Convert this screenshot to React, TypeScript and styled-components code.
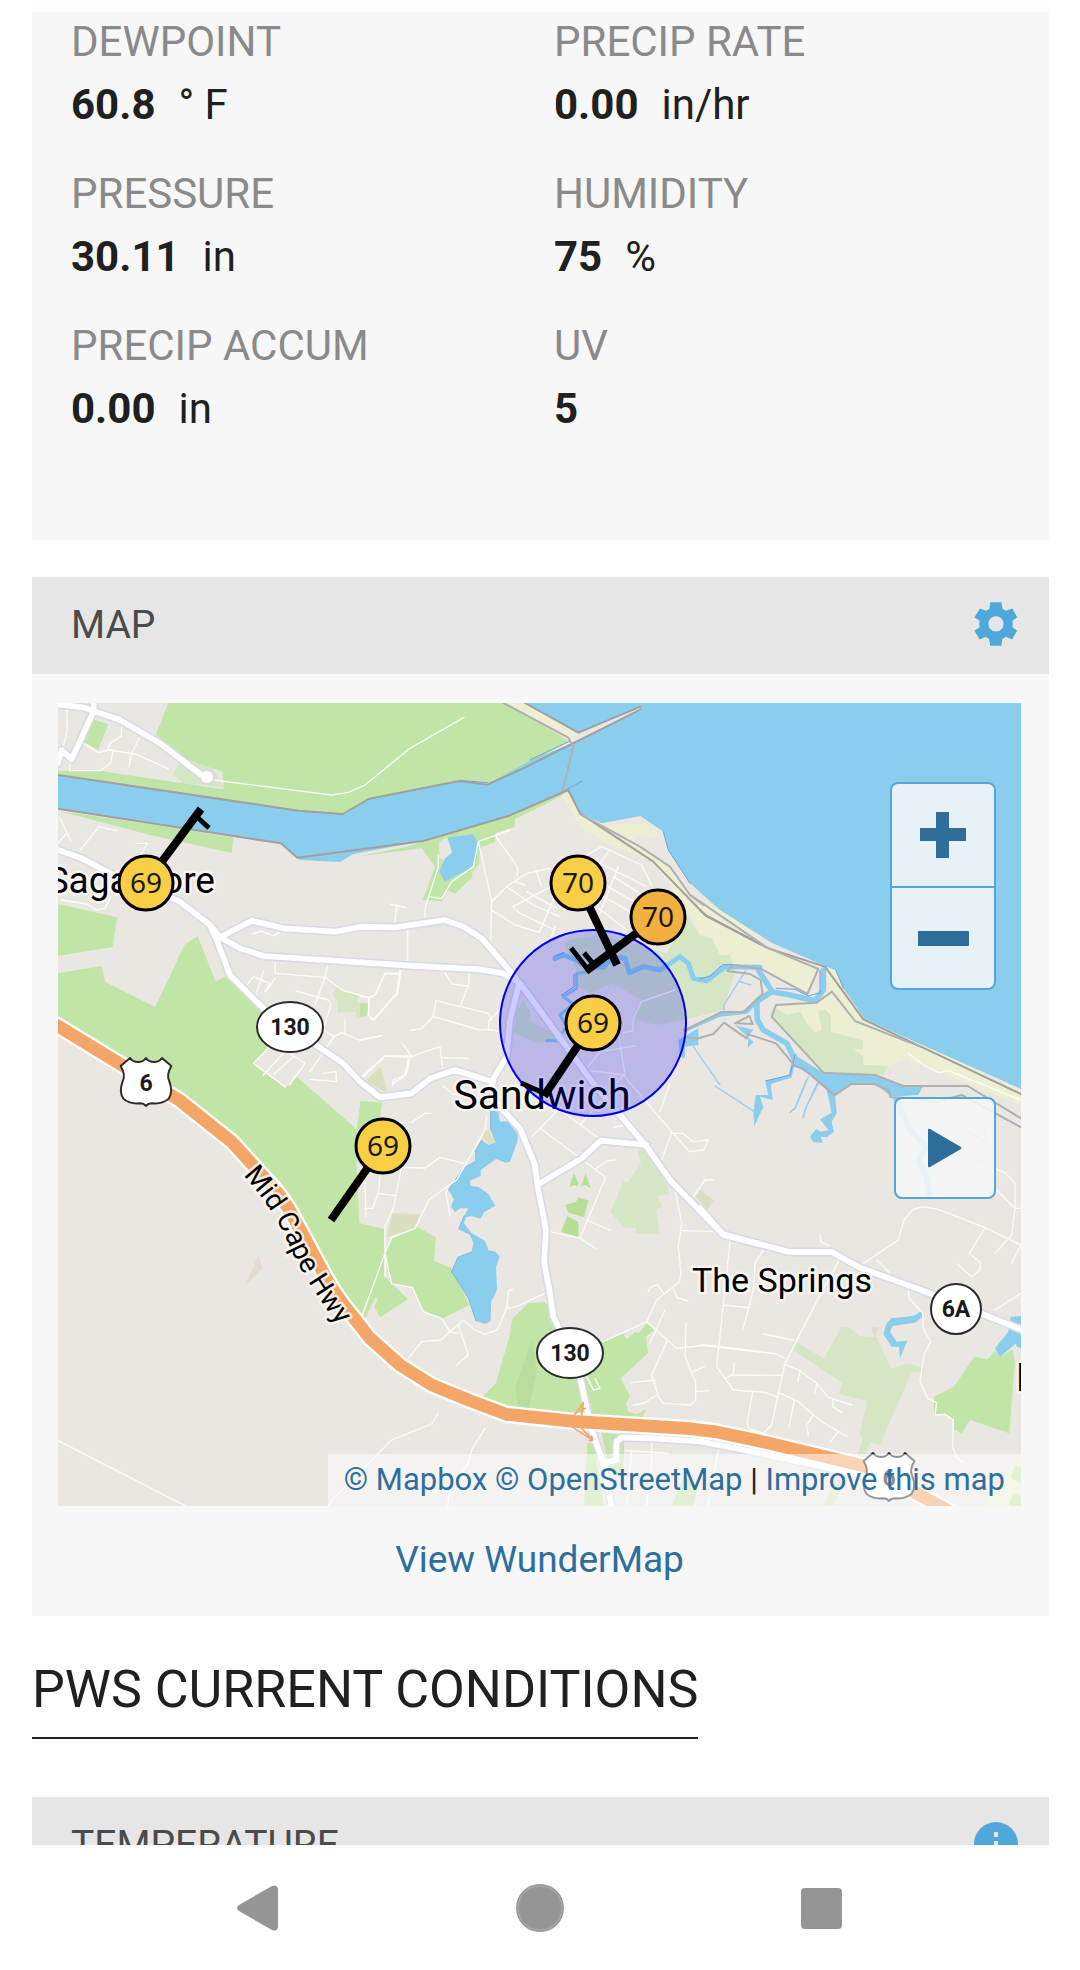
import React from 'react';
import styled, { createGlobalStyle } from 'styled-components';

const colors = {
  ink: '#202020',
  label: '#8a8a8a',
  title: '#4b4b4b',
  link: '#2e6e9b',
  accent: '#4fa8d9',
  panel: '#f7f7f7',
  bar: '#e6e6e6',
  nav: '#959595',
};

const GlobalStyle = createGlobalStyle`
  *, *::before, *::after { box-sizing: border-box; }
  body {
    margin: 0;
    background: #fefefe;
    color: ${colors.ink};
    font-family: Roboto, "Liberation Sans", sans-serif;
  }
  button { font: inherit; color: inherit; cursor: pointer; }
`;

const Screen = styled.div`
  display: flex;
  flex-direction: column;
  height: 100vh;
`;

const Content = styled.main`
  flex: 1;
  min-height: 0;
  overflow-y: auto;
  scrollbar-width: none;
  padding: 0 31px 0 32px;
`;

const TopStrip = styled.div`
  height: 12px;
  background: #fdfdfd;
`;

const Panel = styled.section`
  background: ${colors.panel};
`;

const Readings = styled.dl`
  display: grid;
  grid-template-columns: 1fr 1fr;
  row-gap: 29px;
  margin: 0 0 37px;
  padding: 0 12px 101px 39px;
  background: ${colors.panel};
`;

const Reading = styled.div`
  display: flex;
  flex-direction: column;
  gap: 3px;
  font-size: 42px;
  line-height: 60px;
`;

const ReadingLabel = styled.dt`
  color: ${colors.label};
  text-transform: uppercase;
`;

const ReadingValue = styled.dd`
  display: flex;
  gap: 23px;
  margin: 0;
`;

const PanelHeader = styled.header`
  display: flex;
  justify-content: space-between;
  align-items: flex-start;
  height: 97px;
  padding: 0 31px 0 39px;
  background: ${colors.bar};
`;

const PanelTitle = styled.h3`
  margin: 0;
  font-size: 39px;
  font-weight: 400;
  line-height: 97px;
  color: ${colors.title};
  text-transform: uppercase;
`;

const IconButton = styled.button`
  width: 44px;
  height: 44px;
  margin: 25px 0 0;
  padding: 0;
  border: 0;
  background: none;
  svg { display: block; }
`;

const MapBody = styled.div`
  padding: 29px 28px 26px 26px;
`;

const MapFrame = styled.div`
  position: relative;
  overflow: hidden;
`;

const MapDrawing = styled.svg`
  display: block;
  width: 100%;
  height: auto;
  font-family: Roboto, "Liberation Sans", sans-serif;
`;

const Controls = styled.div`
  position: absolute;
  top: 79px;
  right: 25px;
  display: flex;
  flex-direction: column;
  align-items: flex-end;
  gap: 107px;
`;

const ZoomGroup = styled.div`
  display: flex;
  flex-direction: column;
  width: 106px;
  border: 2px solid ${colors.accent};
  border-radius: 8px;
  background: rgba(246, 246, 246, 0.87);
`;

const ControlButton = styled.button`
  display: flex;
  align-items: center;
  justify-content: center;
  height: 102px;
  padding: 0;
  border: 0;
  background: none;
  & + & { border-top: 2px solid ${colors.accent}; }
`;

const PlayButton = styled(ControlButton)`
  width: 102px;
  border: 2px solid ${colors.accent};
  border-radius: 8px;
  background: rgba(246, 246, 246, 0.87);
`;

const Attribution = styled.div`
  position: absolute;
  right: 0;
  bottom: 0;
  padding: 0 16px;
  background: rgba(255, 255, 255, 0.5);
  font-size: 31px;
  line-height: 52px;
  white-space: nowrap;
`;

const Link = styled.a`
  color: ${colors.link};
  text-decoration: none;
`;

const MapLink = styled(Link)`
  display: block;
  padding-top: 24px;
  font-size: 37px;
  line-height: 60px;
  text-align: center;
`;

const SectionTitle = styled.h2`
  width: fit-content;
  margin: 34px 0 58px;
  padding-bottom: 7px;
  border-bottom: 2px solid ${colors.ink};
  font-size: 52px;
  font-weight: 400;
  line-height: 80px;
  text-transform: uppercase;
`;

const SystemNav = styled.nav`
  display: flex;
  flex: none;
  align-items: center;
  justify-content: center;
  gap: 234px;
  height: 125px;
  background: #fefefe;
`;

const NavButton = styled.button`
  width: 48px;
  height: 48px;
  padding: 0;
  border: 0;
  background: none;
  svg { display: block; }
`;

const readings = [
  { label: 'Dewpoint', value: '60.8', unit: '° F' },
  { label: 'Precip Rate', value: '0.00', unit: 'in/hr' },
  { label: 'Pressure', value: '30.11', unit: 'in' },
  { label: 'Humidity', value: '75', unit: '%' },
  { label: 'Precip Accum', value: '0.00', unit: 'in' },
  { label: 'UV', value: '5' },
];

/* The map is surveyed in overlapping tiles at three units per pixel. */
const tiles = {
  nw: [-8, -3],
  n: [342, -3],
  ne: [642, -3],
  mid: [302, 257],
  sw: [-8, 377],
  s: [342, 377],
  se: [642, 377],
} as const;

type TileName = keyof typeof tiles;
type Shape = { tile: TileName; d: string; fill?: string; width?: number; stroke?: string };

const green = '#c0e5a7';
const pale = '#d4e6c3';
const sand = '#edeed2';
const tan = '#dadfbd';
const water = '#8bcdec';

const areas: Shape[] = [
  { tile: 'nw', fill: green, d: 'M355 0L355 9L318 103L400 180L517 214L521 268L170 216L158 212L24 212V225L745 332L878 342L958 296L1228 243L1312 252L1420 205L1556 122L1355 0Z' },
  { tile: 'nw', fill: pale, d: 'M388 190L430 182L490 208L521 262L400 250L368 225Z' },
  { tile: 'nw', fill: green, d: 'M128 57L175 73L145 150L100 125ZM24 332L390 386L550 413L545 459L300 405ZM24 612L201 652L188 741L24 768Z' },
  { tile: 'nw', fill: green, d: 'M24 820L155 798L165 845L316 921L403 735L443 708L497 845L525 830L640 930L650 1045L612 1090L705 1165L740 1130L920 1288L932 1203L997 1208L990 1250L922 1290L920 1402L928 1570L1003 1587L1005 1730L1073 1797L990 1851L973 1820L985 1795L975 1792L942 1860L905 1840L720 1510L545 1305L220 1090L24 960Z' },
  { tile: 'nw', fill: pale, d: 'M860 862L880 872L922 885V908L956 910L952 947L920 955L917 936L862 938V905L847 882Z' },
  { tile: 'n', fill: green, d: 'M-130 470L20 440L70 425L325 348L490 278V285L345 358V380L290 398L285 425L240 443L238 490L215 520L218 530L165 582L145 570L125 604L68 600L105 500L65 445Z' },
  { tile: 'n', fill: '#eae7e2', d: 'M118 425L142 410L155 455L135 480L118 475Z' },
  { tile: 'n', fill: sand, d: 'M320 9H375L535 98L520 122L502 112Z' },
  { tile: 'n', fill: sand, d: 'M485 285L505 280L540 345L620 375L735 370L775 400L760 415L715 405L700 430L810 500L870 585L1000 650L1080 715V805L975 795L950 740L870 650L760 485L620 430L545 385Z' },
  { tile: 'ne', fill: sand, d: 'M-40 600L0 625L205 745L355 805L322 882L182 806L100 795L65 765L0 715Z' },
  { tile: 'ne', fill: sand, d: 'M375 798L410 812L430 865L495 958L963 1172V1215L620 1078L565 1100L370 1118L215 950L228 915L350 908L388 870Z' },
  { tile: 'ne', fill: pale, d: 'M215 945L230 925L260 945L300 935L320 970L345 998L365 990L355 935L375 928L392 945V995L490 1022L488 1050L455 1045L490 1070V1095L565 1098L550 1125L370 1118Z' },
  { tile: 'n', fill: pale, d: 'M505 720L600 705L700 730L800 760L860 650L900 705L935 715L960 765L990 765L1005 815L970 930L870 955L770 975L710 960L705 935L725 900L635 850L570 880L535 860L530 810L495 740Z' },
  { tile: 'n', fill: pale, d: 'M370 900L390 935L395 965L430 985L490 1015L420 1030L340 1000L350 930Z' },
  { tile: 'sw', fill: '#e0ddd0', d: 'M625 525L638 565L585 618Z' },
  { tile: 'mid', fill: green, d: 'M75 880L95 835L170 800L228 832L222 902L275 925L328 1035L245 1077L190 1055L157 982L95 972ZM0 792L72 808V950L110 985L143 1017L62 1071L45 1040L55 1018L45 1012L14 1080L0 1060ZM0 425L65 430L60 480H0ZM0 130H22V165L0 170Z' },
  { tile: 'mid', fill: tan, d: 'M97 760L180 762L165 805L80 832ZM62 318L18 362L85 402ZM375 510L387 512L406 550L388 555L368 532ZM1020 690L1062 722L1042 748L1008 710Z' },
  { tile: 'mid', fill: '#b4df94', d: 'M641 640L656 672L650 680L644 674L628 682ZM677 640L692 686L676 674L663 680ZM615 735L648 725L655 712L686 722L672 772L625 758ZM622 768L655 785V830L603 815Z' },
  { tile: 'mid', fill: pale, d: 'M833 570L862 572L895 615L920 665L927 705L890 708L908 740L888 748L900 822L828 820V804H797L751 757L790 665H805L843 612Z' },
  { tile: 's', fill: green, d: 'M248 950L288 910L328 770L338 715L385 670L436 666L450 700L475 745L540 900L600 785L668 760L680 778L705 755L715 760L742 730L762 750L738 770L744 820L662 895L690 948L677 970L685 995L712 1003L737 988L725 1018L330 1005ZM562 1090H580L612 1277H552ZM605 1058L672 1065V1140L660 1190L625 1160ZM850 1190L895 1215L880 1277H815Z' },
  { tile: 's', fill: '#b8dd9c', d: 'M397 780L410 880L385 985L355 975L345 920Z' },
  { tile: 'se', fill: pale, d: 'M285 785L372 835L425 740H445L480 768L530 772L572 867L620 850L675 865L670 880L635 875L540 1095L510 1085L490 1130H472L488 1075L478 1065L502 962L418 942L425 908L272 805ZM410 1190H440L400 1277H370Z' },
  { tile: 'se', fill: green, d: 'M938 808L945 845L928 1060L810 1020L785 1060L762 1048L760 1018L735 1003L702 1007V950L762 920L822 830L862 838L885 812L900 832Z' },
  { tile: 'se', fill: sand, d: 'M963 1110L910 1200L855 1277H963Z' },
  { tile: 'se', fill: green, d: 'M945 1155L963 1165V1210L932 1195ZM940 1240L963 1250V1277H926Z' },
  { tile: 'se', fill: '#dfdccf', d: 'M512 740L538 742L524 772Z' },
  { tile: 'n', fill: water, d: 'M380 0V9L535 98L720 20L722 30L515 130L395 180L262 252L178 243L-92 296L-172 342L-305 332L-1030 225V326L-357 430L-308 473L-300 480L-180 486L-140 462L20 432L70 423L325 348L500 270L540 340L605 370L722 348L790 395L805 450L870 550L960 630L1115 728L1275 798L1310 812L1330 865L1395 958L1500 1005L1870 1170V0Z' },
  { tile: 'n', fill: water, d: 'M142 412L182 408L218 402L235 430L228 480L220 500L135 545L118 515L135 475L158 458ZM835 1020L895 985V1035L855 1040V1075L840 1070Z' },
  { tile: 'ne', fill: water, d: 'M285 1065L370 1118L525 1125L610 1160H668L655 1185L575 1190L525 1152H455L405 1190L300 1100ZM105 975L160 990L142 1010ZM145 1012L160 1025L143 1045Z' },
  { tile: 'mid', fill: water, d: 'M392 450L415 455L420 485L445 484L474 525L472 545L450 605L437 608L408 597L362 630V648L330 662L332 678L355 680L385 702L406 737L372 757L362 776L335 768L318 772L312 790L335 820L375 842L385 870L407 875L419 890L408 920L411 990L393 1025L392 1083L375 1092L348 1083L325 1015L275 935L293 892L335 875L340 848L330 825L296 808L312 768L325 745L300 745L285 757L273 740L282 718L265 690L310 625L345 605V575L365 540L385 555L406 548L392 510Z' },
  { tile: 'se', fill: water, d: 'M665 692L668 710L645 728L578 738L570 755L590 785L622 782L600 835L597 800H575L550 762L560 730L575 715L640 708ZM932 710L963 708V805L950 800L948 790L900 832L885 805L925 755ZM370 0H440L405 45L410 100L395 125L402 155L380 172L362 170L368 188L340 187L330 170L348 148L365 155L385 150L360 118L395 98L385 50ZM195 0H250L212 12L218 60L180 50L190 80L163 138L160 100L167 45H205Z' },
];

const lines: Shape[] = [
  { tile: 'n', stroke: water, width: 15, d: 'M465 775L490 765L530 780L560 800L610 802L635 772L675 775L688 818L730 800L780 810L840 770L865 790L880 835L920 842L975 800L1080 802' },
  { tile: 'n', stroke: water, width: 9, d: 'M565 815L530 820V865L490 890L520 912L480 945L500 980L470 1022H440' },
  { tile: 'ne', stroke: water, width: 17, d: 'M370 810V870L345 902L270 885L215 875L170 905L172 960L190 990L260 1030L290 1090L370 1140M175 810L215 872' },
  { tile: 'ne', stroke: water, width: 10, d: 'M-30 985L60 945L140 936L175 900M-46 990L-30 985M285 1065L270 1130L205 1145L210 1190' },
  { tile: 'ne', stroke: '#9dccf0', width: 4, d: 'M137 812L72 915V930M120 845L153 855M-20 1040L60 1155M45 1158L163 1235M325 1130L292 1210M355 1150L330 1200' },
  { tile: 'se', stroke: '#9dccf0', width: 5, d: 'M320 0L285 85L270 97M352 10L315 90L310 112' },
  { tile: 'se', stroke: water, width: 18, d: 'M590 60L630 150L680 200L655 240L680 290L688 345' },
  { tile: 'se', stroke: '#9dccf0', width: 5, d: 'M805 155L860 190L850 140' },
  { tile: 'n', stroke: '#6fa0e8', width: 3, d: 'M390 180L512 122M178 241L262 248M500 268L548 243M790 395L805 450L870 550M465 768L490 758M522 822V860L484 886' },
  { tile: 'ne', stroke: '#6fa0e8', width: 3, d: 'M0 837L30 828L68 794H100M228 865L285 868L325 888L360 878V812M408 812L430 865M285 1065L270 1125L200 1142' },
  { tile: 'mid', stroke: '#6fa0e8', width: 2, d: 'M392 452V510M345 575L365 540M265 690L310 625L345 605M275 935L293 892L335 875M296 808L312 768M348 1083L325 1015L275 935' },
  { tile: 'nw', stroke: '#a0a0a0', width: 6, d: 'M24 225L745 332L878 342L958 296L1228 243L1312 254L1420 205L1772 28M24 326L693 430L742 473L1120 423L1375 348L1555 270' },
  { tile: 'n', stroke: '#a0a0a0', width: 6, d: 'M375 9L535 98L722 20M488 275L505 270L540 340L760 485L915 645L1080 732' },
  { tile: 'n', stroke: '#b0b0b0', width: 6, d: 'M310 9L505 113L520 140L488 270M540 342L720 440L810 500L870 585L910 615' },
  { tile: 'ne', stroke: '#a0a0a0', width: 6, d: 'M0 630L20 648L205 745L375 800L490 958L963 1182' },
  { tile: 'ne', stroke: '#b0b0b0', width: 6, d: 'M-30 585L0 605L200 742L355 807L322 882L182 806L100 795L82 813L150 822L182 840L188 882L130 936H65L-45 990M396 875L350 908L228 915L215 950L370 1118L525 1125L610 1158H803L963 1255M396 875L465 963L660 1040M-45 1010L-10 1016L40 1002L72 968L140 1015L145 1003L228 1030L285 1098L308 1105L403 1185M105 970L148 948L158 972Z' },
  { tile: 'se', stroke: '#b0b0b0', width: 6, d: 'M350 0L403 45L455 12H522L565 30L572 52L640 55L710 65L785 45L963 142' },
];

const lanes: Shape[] = [
  { tile: 'nw', d: 'M50 25L52 90L40 140M62 185L58 212H150L182 188L190 150M100 130L145 157L180 150L258 163L355 206M215 80L214 108L180 130L172 152M268 115L245 160L237 200M490 240L845 285L895 277L945 255L1080 145L1242 52M30 355L62 422M24 430L50 400M90 452L147 380L200 392M258 430L292 430L270 470M35 600L110 612L140 630L165 625L182 590M1040 615L1035 665M1022 613L1068 622M1073 690V780M607 702L635 693L670 708L690 695' },
  { tile: 'nw', d: 'M675 785V820L825 832L832 797M825 832L795 915M825 832L880 872L960 893L978 882L1005 822H1052V810M1052 822L1042 880L970 960L955 945L958 893M738 873L835 900L843 912L820 990L852 1010L780 1115M852 1010L875 998L928 1020L995 1007M885 1000V960M610 830L660 850L645 875M640 815L618 885M675 835L648 875M610 830L590 855M655 1045L610 1090L705 1160M700 1060L640 1125M730 1070L672 1122M718 1155L765 1090L690 1040M780 1138L860 1145L858 1115L820 1120M940 1130L1005 1068H1080M1075 1080L1065 1125L1030 1140L1028 1155' },
  { tile: 'mid', d: 'M120 30L110 100L40 180L25 165L28 112L0 108M120 40H75L45 105L28 112M255 38L275 72L325 78L328 42M325 78L302 135M228 122L220 170L185 205L150 212M228 122L385 160L395 180M220 170L360 210L385 208L388 180L420 150M385 208L420 215M0 242L65 227M0 355L75 288L150 292L138 345L100 370M150 292L180 280L240 260L248 325M248 293L325 295M130 255L155 288M250 378L280 403L340 410M120 488L155 487L195 460H212' },
  { tile: 'mid', d: 'M125 622L195 624L240 592L310 610M380 470L375 510L290 660L208 718L165 805L95 833L75 880L5 1070M75 880L95 972L157 982L190 1055L245 1075L270 1115M262 690L258 700L270 767M125 620L100 745L75 800V950M15 665L18 770M60 650L55 700L38 745H15M55 700L105 707M145 1195L185 1145L242 1140L310 1080L345 1110L373 1123L412 1110L440 1045L446 990H458M440 1045L470 1040L555 1000M295 1095L325 1185L290 1215M265 1115L295 1120' },
  { tile: 'mid', d: 'M515 530L640 405M540 505L737 652L660 835L570 815M710 625L740 603L765 600M680 780L752 812M660 835L707 865M640 380L665 420M660 495L790 345M600 450L710 530M790 345L935 515L905 600M935 520H968L1000 545L1045 540L1030 570L988 575L940 520M930 370L900 455M760 502L800 495M775 220L795 345L675 330M825 258L720 275L680 325M945 90L845 125L820 175L818 212L790 218M945 690L965 790L955 860L963 940L958 965L890 1020L860 1085L730 1145M940 985L950 1012L983 1023M865 995L870 983L892 973L910 1000M965 812L1080 815M1000 710L1035 660H1060' },
  { tile: 's', d: 'M740 725L830 805L920 795L1080 815M800 785L755 885L775 950L790 970L870 975L887 960V905L855 830L858 730M755 885M765 900L693 908M770 945L730 970L700 975M887 935L925 932M880 875L915 858M750 790L795 690M115 1000L95 1032L0 1070M255 1045L215 1110L205 1150L150 1220L143 1277M675 1112L805 1120M755 1085V1150L740 1277M695 1115L680 1277M955 1110L925 1277M560 890L580 930L600 925L585 895' },
  { tile: 'se', d: 'M90 485L50 860L100 930L195 937L230 950M190 510L165 550L160 630L130 745M70 675L145 683M415 545L355 655L255 850L215 1035L190 1060L145 1045L142 1025L158 935M0 795L230 822L255 835M190 762L280 780M75 895L95 885L245 886M100 885L102 850M255 853L300 872L350 910L385 952L455 975M300 875L293 905M350 910L345 938M400 955L398 980L425 998M235 937L295 965L365 1025L442 1070M283 960L267 1040M340 1005L320 1035L325 1065M415 1055L390 1087' },
  { tile: 'se', d: 'M490 550L595 480L612 420L640 388L670 380L715 388L855 443L963 495M855 443L808 520L842 548L840 570L815 590L772 553M530 540L570 580M885 520L935 465L945 385H963M945 385V310L915 278L860 255L790 270M945 385L890 330M625 635L628 655L668 700L670 745L692 785L672 825L660 905L683 955L710 968L705 1005L735 1003L760 1020L758 1100L768 1130L788 1147M885 690L963 640M360 460L362 485L388 497M963 495L935 550' },
  { tile: 'ne', d: 'M625 1060L670 1095L715 1118L745 1112L963 1200' },
  { tile: 'n', d: 'M75 650V625L115 500V465M88 590L125 596L155 545L220 500L235 425L330 390M287 408L352 500V530M235 425L275 605L272 720M275 605L320 560L380 520L450 505M275 630L345 675L418 697L470 575M340 620L470 550M320 560L400 615L480 650M408 510L425 560M345 545L375 555M380 575L470 625M340 622L360 640L465 690M560 465L605 440L725 495L755 555M625 455L600 490L740 560M655 500L600 640M640 530L720 580M625 560L710 610M610 590L700 640M590 620L680 690M0 620L18 622M22 690V780M465 680L455 710M480 720L520 695' },
  { tile: 'sw', d: 'M24 1082L405 1277M835 1277L850 1255L1025 1080L1080 1058' },
];

const roads: Shape[] = [
  { tile: 'nw', d: 'M10 12L100 22L210 60L330 130L450 222L470 230M132 0L130 35L65 178L35 150L24 190M24 450L95 475L200 530L390 605L480 675L510 712L605 662L700 685L855 695L935 680L1035 682L1185 660L1240 680L1295 715L1395 830L1410 860M510 712L570 745L640 768L1080 797L1290 808L1360 820L1410 850M480 675L500 720L540 825L640 925L820 1050L880 1090L930 1145L990 1192L1085 1180L1142 1135L1215 1110L1310 1140L1330 1145' },
  { tile: 'mid', d: 'M475 80L450 180L440 290L395 365L400 420L480 505L525 615L533 680L558 810L552 905L570 1000L580 1070L600 1110L660 1250L692 1400L730 1510L755 1640M480 70L700 370L860 560L930 660L1090 825L1200 853M540 670L665 595L722 542L860 555' },
  { tile: 'se', d: 'M0 385L70 463L268 516H395L480 563L690 640L963 748' },
  { tile: 's', d: 'M612 1150L648 1140L650 1085L665 1072L760 1075L905 1085L1080 1120L1380 1185L1500 1240' },
];

const highway: Shape = {
  tile: 'sw',
  d: 'M-10 -180L24 -162L390 62L545 185L640 290Q700 350 735 420L810 560Q850 640 905 705L960 775L1050 855L1145 915L1260 962L1370 1003L1570 1024L1910 1045L1995 1055L2150 1088L2450 1160L2590 1235L2710 1300',
};

const origin = (tile: TileName) =>
  `translate(${tiles[tile][0]} ${tiles[tile][1]}) scale(${1 / 3})`;

const Strokes = ({ shapes, stroke, width }: { shapes: Shape[]; stroke?: string; width?: number }) => (
  <g fill="none" strokeLinejoin="round" strokeLinecap="round">
    {shapes.map((s, i) => (
      <path key={i} transform={origin(s.tile)} d={s.d} stroke={s.stroke ?? stroke} strokeWidth={s.width ?? width} />
    ))}
  </g>
);

const HaloText = styled.text<{ $size: number }>`
  font-size: ${(p) => p.$size}px;
  fill: #000;
  stroke: rgba(250, 248, 245, 0.8);
  stroke-width: 5px;
  stroke-linejoin: round;
  paint-order: stroke;
`;

const ShieldText = styled.text`
  font-size: 23px;
  font-weight: 700;
  fill: #1a1a1a;
  text-anchor: middle;
`;

const StationText = styled.text`
  font-family: "Noto Sans", "Open Sans", sans-serif;
  font-size: 28px;
  fill: #1a1a00;
  text-anchor: middle;
`;

const OvalShield = ({ x, y, rx, label }: { x: number; y: number; rx: number; label: string }) => (
  <g transform={`translate(${x} ${y})`}>
    <ellipse rx={rx} ry={25} fill="#fff" stroke="#2b2b2b" strokeWidth={2} />
    <ShieldText y={8}>{label}</ShieldText>
  </g>
);

const UsShield = ({ x, y }: { x: number; y: number }) => (
  <g transform={`translate(${x} ${y})`}>
    <path
      transform="scale(0.3333)"
      d="M-48 -72Q-40 -60 -24 -60Q-8 -60 0 -72Q8 -60 24 -60Q40 -60 48 -72L76 -48Q60 -20 70 -2Q82 30 68 50Q52 66 20 64Q6 64 0 72Q-6 64 -20 64Q-52 66 -68 50Q-82 30 -70 -2Q-60 -20 -76 -48Z"
      fill="#fff"
      stroke="#2b2b2b"
      strokeWidth={6}
      strokeLinejoin="round"
    />
    <ShieldText y={9}>6</ShieldText>
  </g>
);

const stations = [
  { x: 88, y: 180, temp: 69, fill: '#f8ce46', shaft: 'L143 106', barbs: 'M139 114L151 125' },
  { x: 520, y: 180, temp: 70, fill: '#f8ce46', shaft: 'L559 262', barbs: '' },
  { x: 600, y: 214, temp: 70, fill: '#f2b03f', shaft: 'L528 268', barbs: 'M531 268L513 245M538 264L526 250' },
  { x: 535, y: 320, temp: 69, fill: '#f8ce46', shaft: 'L486 393', barbs: 'M488 391L463 380' },
  { x: 325, y: 443, temp: 69, fill: '#f8ce46', shaft: 'L273 517', barbs: '' },
];

const StationMap = () => (
  <MapDrawing viewBox="0 0 963 803" role="img" aria-label="Map of weather stations around Sandwich">
    <rect width="963" height="803" fill="#eae7e2" />
    {areas.map((a, i) => (
      <path key={i} transform={origin(a.tile)} d={a.d} fill={a.fill} />
    ))}
    <Strokes shapes={lines} />
    <Strokes shapes={lanes} stroke="#fdfcfa" width={4} />
    <Strokes shapes={roads} stroke="#d9dae6" width={27} />
    <circle cx="149" cy="74" r="8" fill="#d9dae6" />
    <Strokes shapes={roads} stroke="#fff" width={17} />
    <circle cx="149" cy="74" r="6" fill="#fff" />
    <Strokes shapes={[highway]} stroke="#fff" width={52} />
    <Strokes shapes={[highway]} stroke="#f3a668" width={38} />
    <Strokes
      shapes={[{ tile: 's', d: 'M520 1010L550 968L540 1040L578 1080L518 1042M543 990L556 985M568 1082L578 1080L575 1068' }]}
      stroke="#f3a668"
      width={5}
    />

    <OvalShield x={232} y={324} rx={33} label="130" />
    <OvalShield x={512} y={650} rx={33} label="130" />
    <OvalShield x={898} y={606} rx={25} label="6A" />
    <UsShield x={88} y={379} />
    <UsShield x={831} y={774} />

    <HaloText $size={37} x={157} y={190} textAnchor="end">Sagamore</HaloText>
    <HaloText $size={41} x={484} y={406} textAnchor="middle">Sandwich</HaloText>
    <HaloText $size={34} x={724} y={589} textAnchor="middle">The Springs</HaloText>
    <HaloText $size={38} x={958} y={688}>E</HaloText>
    <path id="cape-highway" fill="none" d="M185 472Q216 506 231 542Q246 578 292 638" />
    <HaloText $size={28}>
      <textPath href="#cape-highway">Mid Cape Hwy</textPath>
    </HaloText>

    <circle cx="535" cy="320" r="93" fill="rgba(0,0,255,0.2)" stroke="#0000f0" strokeWidth="2" />
    {stations.map((s, i) => (
      <g key={i} stroke="#000" fill="none">
        <path d={`M${s.x} ${s.y}${s.shaft}`} strokeWidth="8" />
        <path d={s.barbs} strokeWidth="5" />
      </g>
    ))}
    {stations.map((s, i) => (
      <g key={i}>
        <circle cx={s.x} cy={s.y} r="27" fill={s.fill} stroke="#000" strokeWidth="3" />
        <StationText x={s.x} y={s.y + 10}>{s.temp}</StationText>
      </g>
    ))}
  </MapDrawing>
);

const GearIcon = () => (
  <svg width="44" height="44" viewBox="102 65.5 132 132" aria-hidden="true">
    <path
      fill={colors.accent}
      fillRule="evenodd"
      d="M151 66H184L188 87Q193 88 198 92L217 85L232 112L217 122Q219 132 217 141L232 151L216 178L198 170Q193 175 187 176L184 197H151L147 176Q142 174 137 170L119 178L103 151L119 141Q117 132 119 122L103 112L120 85L138 92Q143 88 148 87ZM168 108A23 23 0 1 0 168 154A23 23 0 1 0 168 108Z"
    />
  </svg>
);

const InfoIcon = () => (
  <svg width="44" height="44" viewBox="0 0 44 44" aria-hidden="true">
    <circle cx="22" cy="22" r="22" fill={colors.accent} />
    <path fill={colors.bar} d="M20 10h4v5h-4zM20 19h4v14h-4z" />
  </svg>
);

export default function App() {
  return (
    <>
      <GlobalStyle />
      <Screen>
        <Content>
          <TopStrip />
          <Readings>
            {readings.map((r) => (
              <Reading key={r.label}>
                <ReadingLabel>{r.label}</ReadingLabel>
                <ReadingValue>
                  <strong>{r.value}</strong>
                  {r.unit && <span>{r.unit}</span>}
                </ReadingValue>
              </Reading>
            ))}
          </Readings>

          <Panel>
            <PanelHeader>
              <PanelTitle>Map</PanelTitle>
              <IconButton type="button" aria-label="Map settings">
                <GearIcon />
              </IconButton>
            </PanelHeader>
            <MapBody>
              <MapFrame>
                <StationMap />
                <Controls>
                  <ZoomGroup>
                    <ControlButton type="button" aria-label="Zoom in">
                      <svg width="46" height="46" viewBox="0 0 46 46" aria-hidden="true">
                        <path fill={colors.link} d="M16 0h13v16h17v13H29v17H16V29H0V16h16z" />
                      </svg>
                    </ControlButton>
                    <ControlButton type="button" aria-label="Zoom out">
                      <svg width="51" height="15" viewBox="0 0 51 15" aria-hidden="true">
                        <rect width="51" height="15" rx="1" fill={colors.link} />
                      </svg>
                    </ControlButton>
                  </ZoomGroup>
                  <PlayButton type="button" aria-label="Play">
                    <svg width="34" height="40" viewBox="0 0 34 40" aria-hidden="true">
                      <path fill={colors.link} d="M0 2Q0 0 2 1L33 19Q34 20 33 21L2 39Q0 40 0 38Z" />
                    </svg>
                  </PlayButton>
                </Controls>
                <Attribution>
                  <Link href="#mapbox">© Mapbox</Link> <Link href="#openstreetmap">© OpenStreetMap</Link> |{' '}
                  <Link href="#improve">Improve this map</Link>
                </Attribution>
              </MapFrame>
              <MapLink href="#wundermap">View WunderMap</MapLink>
            </MapBody>
          </Panel>

          <SectionTitle>PWS Current Conditions</SectionTitle>

          <Panel>
            <PanelHeader>
              <PanelTitle>Temperature</PanelTitle>
              <IconButton type="button" aria-label="About temperature">
                <InfoIcon />
              </IconButton>
            </PanelHeader>
          </Panel>
        </Content>

        <SystemNav aria-label="System">
          <NavButton type="button" aria-label="Back">
            <svg width="48" height="48" viewBox="0 0 48 48" aria-hidden="true">
              <path fill={colors.nav} d="M38 2Q43 0 44 5V43Q43 48 38 46L5 27Q1 24 5 21Z" />
            </svg>
          </NavButton>
          <NavButton type="button" aria-label="Home">
            <svg width="48" height="48" viewBox="0 0 48 48" aria-hidden="true">
              <circle cx="24" cy="24" r="24" fill={colors.nav} />
              <circle cx="24" cy="24" r="22" fill="none" stroke="#b0b0b0" />
            </svg>
          </NavButton>
          <NavButton type="button" aria-label="Recent apps">
            <svg width="48" height="48" viewBox="0 0 48 48" aria-hidden="true">
              <rect x="3" y="4" width="41" height="41" rx="4" fill={colors.nav} />
            </svg>
          </NavButton>
        </SystemNav>
      </Screen>
    </>
  );
}
